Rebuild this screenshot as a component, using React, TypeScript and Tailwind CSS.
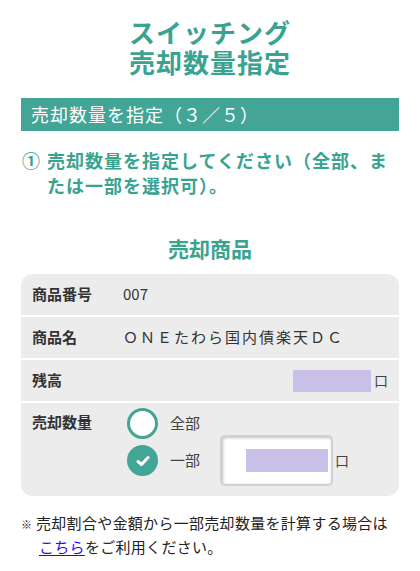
import React from "react";

const font = { fontFamily: '"Noto Sans CJK JP", "Noto Sans", sans-serif' };

function Row({ label, children, last }: { label: string; children: React.ReactNode; last?: boolean }) {
  return (
    <div className={`flex items-center h-[43px] px-[11px] ${last ? "" : "border-b-2 border-white"}`}>
      <div className="w-[91px] shrink-0 text-[15px] font-bold text-[#333]">{label}</div>
      <div className="flex-1 text-[15px] text-[#333]">{children}</div>
    </div>
  );
}

function Masked({ w }: { w: string }) {
  return <span className={`inline-block h-[22px] bg-[#c8c0e6] ${w}`} />;
}

export default function App() {
  return (
    <div className="min-h-screen bg-white px-[21px] pt-[17px] pb-6" style={font}>
      <h1 className="text-center text-[26px] leading-[30px] font-bold text-[#3aa38f] tracking-[1px]">
        スイッチング
        <br />
        売却数量指定
      </h1>

      <div className="mt-[21px] h-[33px] bg-[#42a596] px-[10px] flex items-center text-white text-[18px] tracking-[1px]">
        売却数量を指定（３／５）
      </div>

      <div className="mt-[17px] flex text-[18px] leading-[25px] font-bold text-[#3aa38f] tracking-[1px]">
        <span className="shrink-0 w-[26px] pl-[1px]">①</span>
        <span>売却数量を指定してください（全部、または一部を選択可）。</span>
      </div>

      <h2 className="mt-[36px] text-center text-[21px] leading-[28px] font-bold text-[#3aa38f]">売却商品</h2>

      <div className="mt-[12px] bg-[#ececec] rounded-[12px] overflow-hidden">
        <Row label="商品番号">007</Row>
        <Row label="商品名">
          <span className="tracking-[2px]">ＯＮＥたわら国内債楽天ＤＣ</span>
        </Row>
        <Row label="残高">
          <div className="flex justify-end items-center">
            <Masked w="w-[78px]" />
            <span className="ml-[3px] text-[14px] text-[#444]">口</span>
          </div>
        </Row>
        <div className="flex px-[11px] pt-[5px] pb-[10px]">
          <div className="w-[95px] shrink-0 pt-[3px] text-[15px] leading-[22px] font-bold text-[#333]">売却数量</div>
          <div className="flex flex-col">
            <div className="flex items-center h-[31px]">
              <span className="w-[31px] h-[31px] rounded-full border-[3px] border-[#42a596] bg-white" />
              <span className="ml-[12px] text-[15px] text-[#444]">全部</span>
            </div>
            <div className="flex items-center -mt-[4px]">
              <span className="w-[31px] h-[31px] rounded-full bg-[#42a596] flex items-center justify-center">
                <svg width="14" height="12" viewBox="0 0 14 12">
                  <path d="M2 6.5 L5.5 9.5 L12 2.5" fill="none" stroke="white" strokeWidth="3" strokeLinecap="round" strokeLinejoin="round" />
                </svg>
              </span>
              <span className="ml-[12px] text-[15px] text-[#444]">一部</span>
              <div className="ml-[20px] w-[113px] h-[51px] bg-white border-2 border-[#d0d0d0] rounded-[5px] shadow-[inset_1px_1px_3px_rgba(0,0,0,0.25)] flex items-center justify-end pr-[3px]">
                <Masked w="w-[82px] h-[23px]" />
              </div>
              <span className="ml-[2px] text-[14px] text-[#444]">口</span>
            </div>
          </div>
        </div>
      </div>

      <div className="mt-[15px] flex text-[15px] leading-[24px] text-[#222] tracking-[0.3px]">
        <span className="shrink-0 w-[15px] text-[11px] pt-[1px]">※</span>
        <span>
          売却割合や金額から一部売却数量を計算する場合は
          <a className="text-[#1a0dff] underline underline-offset-2 ml-[3px]">こちら</a>
          をご利用ください。
        </span>
      </div>
    </div>
  );
}
